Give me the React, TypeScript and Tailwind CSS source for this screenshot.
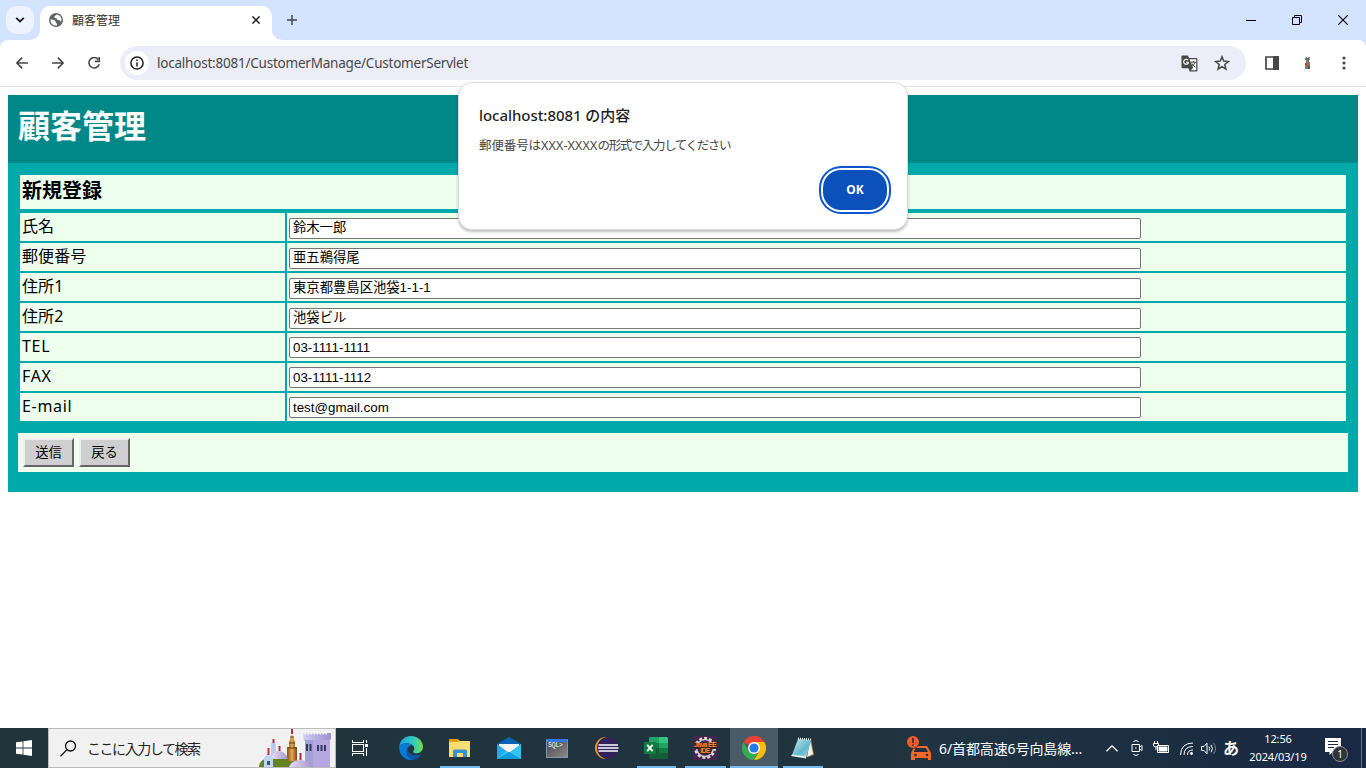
import React from "react";

const UI = "font-['Noto_Sans','Noto_Sans_CJK_JP',sans-serif]";
const CJK = "font-['Noto_Sans_CJK_JP',sans-serif]";

type Field = { label: string; value: string; latin?: boolean };

const fields: Field[] = [
  { label: "氏名", value: "鈴木一郎" },
  { label: "郵便番号", value: "亜五鵜得尾" },
  { label: "住所1", value: "東京都豊島区池袋1-1-1" },
  { label: "住所2", value: "池袋ビル" },
  { label: "TEL", value: "03-1111-1111", latin: true },
  { label: "FAX", value: "03-1111-1112", latin: true },
  { label: "E-mail", value: "test@gmail.com", latin: true },
];

function TabStrip() {
  return (
    <div className="flex h-10 shrink-0 bg-[#d3e3fd]">
      <div className="ml-1.5 mt-1.5 flex h-7 w-7 items-center justify-center rounded-[10px] bg-[#ecf2fe]">
        <svg width="10" height="6" viewBox="0 0 10 6" fill="none" stroke="#1f1f1f" strokeWidth="1.8">
          <path d="M1.2 .8 5 4.5 8.8 .8" />
        </svg>
      </div>
      <div className="relative ml-1.5 mt-1.5 flex h-[34px] w-[232px] items-center rounded-t-[10px] bg-white">
        <svg className="absolute -left-2.5 bottom-0" width="10" height="10"><path d="M10 0V10H0A10 10 0 0 0 10 0" fill="white" /></svg>
        <svg className="absolute -right-2.5 bottom-0" width="10" height="10"><path d="M0 0V10H10A10 10 0 0 1 0 0" fill="white" /></svg>
        <svg className="-mt-[6px] ml-[9px]" width="14" height="14" viewBox="0 0 14 14">
          <circle cx="7" cy="7" r="7" fill="#5f6368" />
          <path d="M1.5 6.2 5 7 6.8 8.4V9.9L8 10.6V12.4C4.5 13.2 1.1 10.5 1.5 6.2M7.6 1.6 5.4 3.4 5.6 5 7.6 5.2 8.4 7 10.6 7.2 11.6 8.8 12.5 7.6C12.8 4.5 10.8 2 7.6 1.6" fill="#fff" />
        </svg>
        <span className={`-mt-[7px] ml-[9px] text-[12px] leading-4 text-[#333] ${CJK}`}>顧客管理</span>
        <svg className="-mt-[6px] ml-auto mr-3" width="8" height="8" viewBox="0 0 8 8" stroke="#1f1f1f" strokeWidth="1.5"><path d="M.4 .4 7.6 7.6M7.6 .4 .4 7.6" /></svg>
      </div>
      <svg className="ml-[15px] mt-[15px]" width="10" height="10" viewBox="0 0 10 10" stroke="#474747" strokeWidth="1.5"><path d="M5 0V10M0 5H10" /></svg>
      <div className="ml-auto flex h-10 items-center">
        <svg className="mr-9" width="10" height="10" stroke="#000"><path d="M0 5.5H10" /></svg>
        <svg className="mr-9" width="10" height="10" fill="none" stroke="#000"><path d="M.5 2.5H7.5V9.5H.5ZM2.5 2.5V.5H9.5V7.5H7.5" /></svg>
        <svg className="mr-[18px]" width="10" height="10" stroke="#000" strokeWidth="1.1"><path d="M0 0 10 10M10 0 0 10" /></svg>
      </div>
    </div>
  );
}

function Toolbar() {
  return (
    <div className="bg-[#d3e3fd]">
      <div className="flex h-[47px] items-start rounded-t-[8px] border-b border-[#dfe1e5] bg-white pt-1.5">
        <div className="flex h-[34px] items-center">
          <svg className="ml-4" width="12" height="12" viewBox="0 0 12 12" fill="none" stroke="#474747" strokeWidth="1.6"><path d="M12 6H1M6.2 .6.9 6 6.2 11.4" /></svg>
          <svg className="ml-6" width="12" height="12" viewBox="0 0 12 12" fill="none" stroke="#474747" strokeWidth="1.6"><path d="M0 6H11M5.8 .6 11.1 6 5.8 11.4" /></svg>
          <svg className="ml-6" width="12" height="12" viewBox="0 0 12 12" fill="none" stroke="#474747" strokeWidth="1.6"><path d="M10.2 2.4A5.2 5.2 0 1 0 11.2 7.2M11.3 0V4.4H6.8" /></svg>
        </div>
        <div className="ml-5 flex h-[34px] w-[1126px] items-center rounded-full bg-[#ebeef8] pl-[5px]">
          <div className="flex h-6 w-6 items-center justify-center rounded-full bg-white">
            <svg width="14" height="14" viewBox="0 0 14 14" fill="none" stroke="#1f1f1f" strokeWidth="1.5"><circle cx="7" cy="7" r="6.1" /><path d="M7 6.2V10.4M7 3.6V5.1" /></svg>
          </div>
          <span className={`ml-2 whitespace-nowrap text-[13.5px] leading-5 tracking-[-0.22px] text-[#474747] ${UI}`}>localhost:8081/CustomerManage/CustomerServlet</span>
          <svg className="ml-auto" width="17" height="17" viewBox="0 0 17 17">
            <path d="M1 .5H7L8 3H15.4Q16.4 3 16.4 4V15.4Q16.4 16.4 15.4 16.4H8.6L7.4 13.2H1.6Q.5 13.2.5 12V1Q.5.5 1 .5" fill="#474747" />
            <path d="M8.6 4.2H15.2V15.2H9.8L12 13 8.6 4.2" fill="#fff" />
            <path d="M7.1 5.2A2.5 2.5 0 1 0 7.3 8.1V7.2H5" fill="none" stroke="#fff" strokeWidth="1.1" />
            <path d="M9.5 7.2H15M12.3 6V7.2M14 7.2Q13 10 10.5 12M11 8.5Q12 11 14.3 12" fill="none" stroke="#474747" />
          </svg>
          <svg className="ml-4 mr-4" width="16" height="16" viewBox="0 0 16 16" fill="none" stroke="#474747" strokeWidth="1.5"><path d="m8 1.8 1.7 4.3 4.7.4-3.6 3 1.1 4.6L8 11.7l-3.9 2.4 1.1-4.6-3.6-3 4.7-.4Z" /></svg>
        </div>
        <div className="flex h-[34px] items-center">
          <svg className="ml-[19px]" width="14" height="14"><path d="M1 1H13V13H1Z" fill="none" stroke="#474747" strokeWidth="1.7" /><path d="M8 0H14V14H8Z" fill="#474747" /></svg>
          <svg className="ml-[26px]" width="5" height="12"><path d="M1 1H4V5H5V12H0V7L1 5Z" fill="#777" /><path d="M0 6H3V9H0Z" fill="#d64b22" /><path d="M1 0V3M4 0V3M4 9V12" stroke="#333" /></svg>
          <svg className="ml-[32px]" width="4" height="14" fill="#474747"><circle cx="2" cy="2" r="1.6" /><circle cx="2" cy="7" r="1.6" /><circle cx="2" cy="12" r="1.6" /></svg>
        </div>
      </div>
    </div>
  );
}

function CustomerPage() {
  return (
    <main className={`flex-1 bg-white px-2 pt-2 text-black ${CJK}`}>
      <header className="h-[68px] bg-[#008888] pl-2.5 pt-[7px]">
        <h1 className="text-[32px] font-bold leading-[45px] text-white">顧客管理</h1>
      </header>
      <section className="h-[329px] bg-[#00aaaa] px-2.5 pt-3">
        <div className="mx-0.5">
          <h2 className="mb-1 h-[34px] bg-[#eeffee] pl-0.5 text-[20px] font-bold leading-[30px]">新規登録</h2>
          <div className="grid gap-0.5">
            {fields.map((f) => (
              <div key={f.label} className="grid h-7 grid-cols-[265px_1fr] gap-0.5">
                <div className={`bg-[#eeffee] pl-0.5 text-[16px] leading-[27px] ${f.latin ? "tracking-[0.7px]" : "tracking-[0.1px]"} ${UI}`}>{f.label}</div>
                <div className={`bg-[#eeffee] pl-0.5 ${f.latin ? "pt-1" : "pt-[5px]"}`}>
                  <input
                    defaultValue={f.value}
                    className={`block h-[21px] w-[852px] rounded-[2px] border border-[#767676] bg-white px-[3px] font-['Liberation_Sans','Noto_Sans_CJK_JP',sans-serif] text-[13.333px] outline-none ${f.latin ? "pb-px" : "pb-[4px]"}`}
                  />
                </div>
              </div>
            ))}
          </div>
        </div>
        <div className="mt-3 flex h-[39px] gap-[5px] bg-[#eeffee] pl-[5px] pt-[5px]">
          {["送信", "戻る"].map((t) => (
            <button key={t} className="h-[29px] w-[51px] border-2 border-t-[#efefef] border-l-[#efefef] border-r-[#666] border-b-[#666] bg-[#cfcfcf] pb-0.5 text-[13.333px] leading-[20px]">{t}</button>
          ))}
        </div>
      </section>
    </main>
  );
}

function AlertDialog() {
  return (
    <div role="alertdialog" className={`absolute left-[458px] top-[82px] flex h-[148px] w-[450px] flex-col rounded-[14px] border border-[#dcdcdc] bg-white px-5 pt-[21px] text-[#1f1f1f] shadow-[0_2px_3px_rgba(0,0,0,0.25)] ${UI}`}>
      <div className="whitespace-nowrap text-[15px] font-medium leading-[22px] tracking-[-0.05px]">localhost:8081 の内容</div>
      <div className="mt-[10px] flex whitespace-nowrap text-[12.5px] leading-[20px] tracking-[-1.4px] text-[#474747]">
        <span className="tracking-[-0.1px]">郵便番号は</span>
        <span className="tracking-[0.15px]">XXX-XXXX</span>
        <span>の形式で入力してください</span>
      </div>
      <button className="mt-[14px] flex h-10 w-16 items-center justify-center self-end rounded-[18px] bg-[#0b50bb] text-[12px] font-bold text-white shadow-[0_0_0_2px_#fff,0_0_0_4px_#0b57d0]">OK</button>
    </div>
  );
}

function Castle() {
  return (
    <svg width="76" height="38" viewBox="0 0 76 38">
      <defs>
        <linearGradient id="tower" x1="0" x2="1"><stop stopColor="#d5ccf5" /><stop offset="1" stopColor="#9b8fcd" /></linearGradient>
        <linearGradient id="gold" x1="0" x2="1"><stop stopColor="#805020" /><stop offset=".5" stopColor="#eda84a" /><stop offset="1" stopColor="#774719" /></linearGradient>
        <linearGradient id="dome" x1="0" x2="1"><stop stopColor="#e9defa" /><stop offset="1" stopColor="#a796c9" /></linearGradient>
      </defs>
      <path d="M0 38Q0 31 9 29L28 27Q40 29 43 38Z" fill="#638323" />
      <path d="M12 30V15L14 12 17 15V30Z" fill="#b9cce7" />
      <path d="M13.5 10H15.5V14H13.5Z" fill="#c52b4b" />
      <path d="M28 32V18H30V13L33 5 36 13V18H38V32Z" fill="url(#gold)" />
      <path d="M31 8H35M30 14H36M29 19H37" stroke="#593714" />
      <path d="M32 0H34V5H32Z" fill="#b52a44" />
      <path d="M12 30Q14 22 20 22T29 30Z" fill="url(#dome)" />
      <path d="M19.5 17H21.5V22H19.5Z" fill="#bd2643" />
      <path d="M44 4 47 6V4L50 6V4L53 6V4L56 6V4L59 6V4L62 6V4L65 6V4L68 6V4L72 4V10L70 12V38H54V12H45Z" fill="url(#tower)" />
      <path d="M54 11H71V38H54Z" fill="#b5a7df" />
      <path d="M48 16V22M51.5 16V22M59 16V22M62.5 16V22M66 16V22" stroke="#33365d" strokeWidth="2" />
      <path d="M46 11H54V38H46Z" fill="#9fa2d2" /><path d="M48 15V22M51.5 15V22" stroke="#33365d" strokeWidth="2" />
      <path d="M5 38V29L9 24 14 29V38Z" fill="#c0d5ef" /><path d="M8.5 19H10.5V26H8.5Z" fill="#c52b4b" /><path d="M8 32H11V36H8Z" fill="#355675" />
      <path d="M30 38Q33 31 41 31T53 38Z" fill="url(#dome)" /><path d="M40.5 24H42.5V31H40.5Z" fill="#bd2643" />
    </svg>
  );
}

function EdgeIcon() {
  return (
    <svg width="24" height="24" viewBox="0 0 24 24">
      <defs><linearGradient id="edge" x1="0" x2="1"><stop stopColor="#209ce5" /><stop offset=".55" stopColor="#30c9c7" /><stop offset="1" stopColor="#72dc4a" /></linearGradient></defs>
      <path d="M.3 10.5C1 4 6 0 12 0C19 0 24 5 24 11C24 15 20.5 17.4 17 17.4C14.5 17.4 13.5 16 14.5 14.8C17 11.5 14 7.8 9 7.4C5.5 7.1 2 8 .3 10.5" fill="url(#edge)" />
      <path d="M.3 10.5C3 6.3 11.5 6.3 14 10C11.5 8.8 8.6 10 8.5 13.5C8.4 18 13 21.4 20.5 19.5C18 22.6 15 24 12 24C5 24-.5 18 .3 10.5" fill="#087bd4" />
      <path d="M9.5 10.5C5 14 7 21 13 23.8C17 23.8 20 22 21.6 19.2C22.1 18.3 21.5 18 20.8 18.4C15 20.5 9.6 18 9 13.5Z" fill="#0b55a4" />
    </svg>
  );
}

function FolderIcon() {
  return (
    <svg width="22" height="19" viewBox="0 0 22 19">
      <path d="M0 0H9L11 2V5H0Z" fill="#e2a000" /><path d="M0 3H9L11 2H21V18H0Z" fill="#ffdc72" />
      <path d="M4 18V12Q4 10.5 5.5 10.5H16.5Q18 10.5 18 12V18H14V14H8V18Z" fill="#3592d5" />
    </svg>
  );
}

function MailIcon() {
  return (
    <svg width="24" height="22" viewBox="0 0 24 22">
      <path d="M0 7 12 0 24 7V14H0Z" fill="#0865b5" /><path d="M2 7H22V15H2Z" fill="#f4f4f7" />
      <path d="M0 7 12 16 24 7V22H0Z" fill="#28a8ea" /><path d="M0 22 9 13.5 12 16 24 7V22Z" fill="#35c5f4" /><path d="M0 22 12 15 24 22Z" fill="#139bdd" />
    </svg>
  );
}

function SqlIcon() {
  return (
    <div className="h-[19px] w-[22px] border border-[#8294ad] border-t-[3px] border-t-[#3478ef] bg-linear-to-br from-[#4a4a4a] to-[#8b8b8b] pl-px font-['Liberation_Mono',monospace] text-[6.5px] leading-[7px] tracking-[-0.2px] text-white">SQL&gt;</div>
  );
}

function EclipseIcon() {
  return (
    <svg width="24" height="22" viewBox="0 0 24 22">
      <circle cx="11" cy="11" r="11" fill="#f7922b" /><circle cx="13" cy="11" r="11" fill="#203039" /><circle cx="13.3" cy="11" r="10.5" fill="#30225c" />
      <path d="M3.5 8H23M3 11H23.5M3.5 14H23" stroke="#fff" strokeWidth="1.5" />
    </svg>
  );
}

function ExcelIcon() {
  return (
    <svg width="24" height="22" viewBox="0 0 24 22">
      <path d="M6 0H15V6H5V1Z" fill="#21a366" /><path d="M15 0H23L24 1V6H15Z" fill="#33c481" /><path d="M5 6H15V11H5Z" fill="#107c41" /><path d="M15 6H24V11H15Z" fill="#21a366" />
      <path d="M5 11H24V21L23 22H6L5 21Z" fill="#185c37" /><path d="M15 11H24V16H15Z" fill="#107c41" /><rect y="5" width="12" height="12" rx="1" fill="#107c41" />
      <path d="M3.2 7.8 8.6 14.2M8.6 7.8 3.2 14.2" stroke="#fff" strokeWidth="1.8" />
    </svg>
  );
}

function JavaIcon() {
  return (
    <div className="relative h-6 w-6 overflow-hidden bg-[#44254e]">
      <svg width="24" height="24" viewBox="0 0 24 24" fill="none"><circle cx="12" cy="12" r="9.8" stroke="#ddd" strokeWidth="2.4" strokeDasharray="3 2" /><circle cx="12" cy="12" r="8.4" stroke="#ccc" strokeWidth="1.5" /><path d="M1 7H23V13H18V18H7V13H1Z" fill="#3b2024" /></svg>
      <div className="absolute inset-x-0 top-[6px] whitespace-nowrap text-center font-['Liberation_Sans',sans-serif] text-[7px] font-bold leading-[6px] tracking-[-0.7px] text-[#ff852d]">Java EE<br />IDE</div>
    </div>
  );
}

function ChromeIcon() {
  return (
    <svg width="24" height="24" viewBox="0 0 24 24">
      <path d="M12 12 1.6 6A12 12 0 0 1 22.4 6Z" fill="#ea4335" /><path d="M12 0A12 12 0 0 1 22.4 6H12Z" fill="#ea4335" />
      <path d="M12 6H22.4A12 12 0 0 1 12 24L17.2 15Z" fill="#fbbc04" /><path d="M1.6 6 6.8 15 12 18H15.5L12 24A12 12 0 0 1 1.6 6" fill="#34a853" />
      <circle cx="12" cy="12" r="6" fill="#fff" /><circle cx="12" cy="12" r="4.6" fill="#2879ed" />
    </svg>
  );
}

function NotepadIcon() {
  return (
    <svg width="24" height="23" viewBox="0 0 24 23">
      <defs><linearGradient id="note" x1="0" y1="0" x2="1" y2="1"><stop stopColor="#cfe8eb" /><stop offset=".6" stopColor="#62b7cd" /><stop offset="1" stopColor="#b8dce2" /></linearGradient></defs>
      <path d="M20 2 23 18 17 20Z" fill="#aa8251" /><path d="M19 3 22 17 16 20Z" fill="#f2f1e9" />
      <path d="M7 2 20 3 15.5 20 1 18Z" fill="url(#note)" /><path d="M1 17.5 15.5 19.5 15 21.5 0 19Z" fill="#e8efef" /><path d="M7 1.5 20 2.5" stroke="#eee" strokeWidth="2" strokeDasharray="1 1" />
    </svg>
  );
}

const apps = [
  { icon: <EdgeIcon />, box: "w-[49px]", bar: "" },
  { icon: <FolderIcon />, box: "w-[49px]", bar: "bg-[#76b9ed]" },
  { icon: <MailIcon />, box: "w-[49px]", bar: "" },
  { icon: <SqlIcon />, box: "w-[48px]", bar: "" },
  { icon: <EclipseIcon />, box: "w-[51px]", bar: "" },
  { icon: <ExcelIcon />, box: "w-[48px]", bar: "bg-[#76b9ed]" },
  { icon: <JavaIcon />, box: "w-[50px]", bar: "bg-[#76b9ed]" },
  { icon: <ChromeIcon />, box: "w-[48px] bg-[#4a5a66]", bar: "bg-[#76b9ed]", full: true },
  { icon: <NotepadIcon />, box: "w-[49px]", bar: "bg-[#76b9ed]" },
];

function Taskbar() {
  return (
    <footer className={`flex h-10 shrink-0 items-center overflow-hidden bg-linear-to-r from-[#20343c] via-[#203440] via-65% to-[#192943] text-white ${UI}`}>
      <div className="flex w-12 justify-center">
        <svg width="16" height="16" viewBox="0 0 16 16" fill="#fff"><path d="M0 2.3 6.6 1.4V7.6H0ZM7.4 1.3 16 0V7.6H7.4ZM0 8.4H6.6V14.6L0 13.7ZM7.4 8.4H16V16L7.4 14.8Z" /></svg>
      </div>
      <div className="flex h-10 w-[288px] items-center border border-[#bbb] bg-[#f1f1f1] pl-[11px] text-[#222]">
        <svg width="17" height="17" viewBox="0 0 17 17" fill="none" stroke="#111" strokeWidth="1.3"><circle cx="10.5" cy="6" r="5" /><path d="M7 9.6.5 16.2" /></svg>
        <span className="ml-[10px] whitespace-nowrap text-[14px] tracking-[-1.45px]">ここに入力して検索</span>
        <div className="ml-auto"><Castle /></div>
      </div>
      <div className="flex w-[50px] pl-4">
        <svg width="17" height="16" viewBox="0 0 17 16" fill="none" stroke="#fff" strokeWidth="1.1"><path d="M.5 0V2.5H11.5V0M.5 4.5H11.5V11.5H.5ZM.5 16V13.5H11.5V16M14.5 0V3M14.5 8V16" /><path d="M13 4H16V7H13Z" fill="#fff" stroke="none" /></svg>
      </div>
      {apps.map((a, i) => (
        <div key={i} className={`relative flex h-10 items-center justify-center ${a.box}`}>
          {a.icon}
          <span className={`absolute bottom-0 h-0.5 ${a.full ? "inset-x-0" : "inset-x-[4.5px]"} ${a.bar}`} />
        </div>
      ))}
      <div className="ml-auto flex h-10 items-center">
        <svg width="24" height="25" viewBox="0 0 24 25">
          <path d="M4 24V17L7.5 10H20L24 17V24H21V22H8V24Z" fill="#f26a2a" /><path d="M8.7 12H18.8L21 16H6.7Z" fill="#20303c" /><circle cx="8.5" cy="19" r="1.3" fill="#20303c" /><circle cx="20" cy="19" r="1.3" fill="#20303c" />
          <circle cx="6" cy="6" r="6.7" fill="#20303c" /><circle cx="6" cy="6" r="6" fill="#f15d25" /><path d="M6 2V7M6 8.5V10" stroke="#203040" strokeWidth="1.6" />
        </svg>
        <span className="ml-2 w-[151px] whitespace-nowrap text-[14px] tracking-[-0.1px]">6/首都高速6号向島線...</span>
        <svg className="ml-4" width="12" height="7" viewBox="0 0 12 7" fill="none" stroke="#fff" strokeWidth="1.3"><path d="M.5 6.3 6 .8 11.5 6.3" /></svg>
        <svg className="ml-[13px]" width="12" height="16" viewBox="0 0 12 16" fill="none" stroke="#fff" strokeWidth="1"><path d="M2.5 1.5Q5 -.3 7.5 1.5M2.5 14.5Q5 16.3 7.5 14.5M1 4.5H8.5V11.5H1ZM8.5 7 11 5.5V10.5L8.5 9M4 8H5.5" /></svg>
        <svg className="ml-2.5" width="16" height="14" viewBox="0 0 16 14" fill="none" stroke="#fff"><path d="M4.5 4.5H15.5V11.5H4.5Z" /><path d="M6 6H14V10H6Z" fill="#fff" /><path d="M1.5 0V2M4.5 0V2M.5 2.5H5.5V5Q3 7 .5 5ZM3 6V9" /></svg>
        <svg className="ml-[11px]" width="13" height="13" viewBox="0 0 13 13" fill="none" stroke="#fff" strokeWidth="1"><path d="M.5 13Q1 1 13 1M4 13Q4 4.5 13 4.5M7.4 13Q7.5 8 13 8" /><circle cx="11.5" cy="11.5" r="1.4" fill="#fff" stroke="none" /></svg>
        <svg className="ml-2" width="16" height="13" viewBox="0 0 16 13" fill="none" stroke="#fff" strokeWidth="1"><path d="M.5 4.5H3L6 1V12L3 8.5H.5ZM8 4.5Q9.5 6.5 8 8.5M10 2.8Q13 6.5 10 10.2" /><path d="M12.5 1Q16.5 6.5 12.5 12" stroke="#7b8594" /></svg>
        <span className="ml-1.5 w-4 text-[16px] font-bold leading-5">あ</span>
        <div className="ml-[9px] w-[60px] whitespace-nowrap text-center text-[11px] leading-[18px] tracking-[-0.12px]">12:56<br />2024/03/19</div>
        <div className="relative ml-[17px] h-[26px] w-6">
          <svg width="17" height="20" viewBox="0 0 17 20"><path d="M0 3H16V17H8L4.5 20V17H0Z" fill="#fff" /><path d="M3 6.5H13M3 9.5H13M3 12.5H9" stroke="#1c2b43" /></svg>
          <div className="absolute left-[7px] top-[11px] flex h-4 w-4 items-center justify-center rounded-full border border-[#8b8f96] bg-[#30343a] text-[10px] leading-none">1</div>
        </div>
        <div className="ml-3 mr-1 h-10 w-px bg-[#68758a]" />
      </div>
    </footer>
  );
}

export default function App() {
  return (
    <div className="relative flex h-[768px] w-[1366px] flex-col overflow-hidden bg-white">
      <TabStrip />
      <Toolbar />
      <CustomerPage />
      <AlertDialog />
      <Taskbar />
    </div>
  );
}
